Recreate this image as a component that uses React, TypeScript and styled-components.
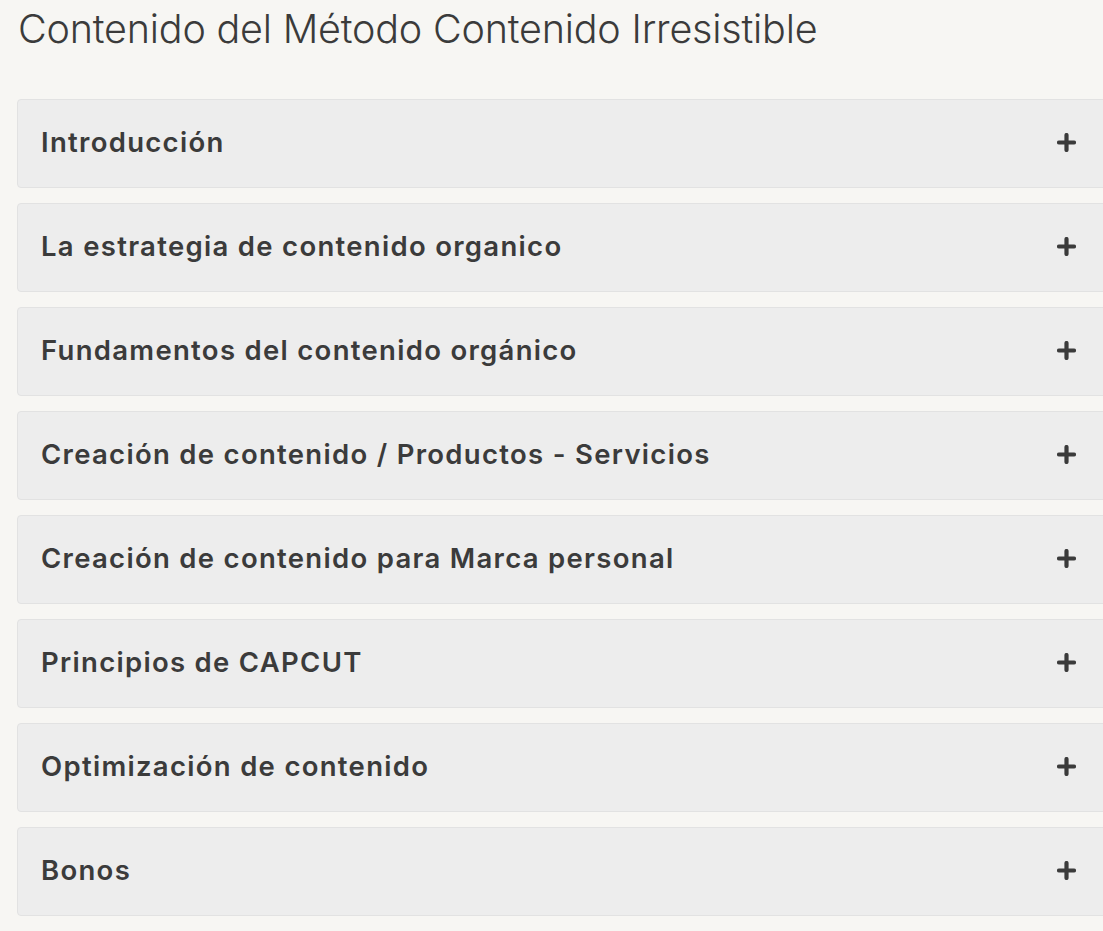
import styled, { createGlobalStyle } from 'styled-components';

const GlobalStyle = createGlobalStyle`
  html, body {
    margin: 0;
    padding: 0;
    background: #f7f6f3;
    overflow: hidden;
  }
  body {
    font-family: Inter, "Noto Sans", sans-serif;
    color: #3b3b3b;
  }
`;

const Page = styled.div`
  padding: 6px 0 0 17px;
  width: 1100px;
`;

const Title = styled.h2`
  margin: 0 0 0 1px;
  font-size: 39.5px;
  font-weight: 300;
  line-height: 46px;
  letter-spacing: -0.2px;
  color: #3b3b3b;
`;

const List = styled.div`
  margin-top: 47px;
  display: flex;
  flex-direction: column;
  gap: 15px;
`;

const Item = styled.div`
  display: flex;
  align-items: center;
  justify-content: space-between;
  height: 89px;
  box-sizing: border-box;
  padding: 0 40px 3px 23px;
  background: #ededed;
  border: 1px solid #e2e2e2;
  border-radius: 4px;
`;

const ItemTitle = styled.span`
  font-size: 27.5px;
  font-weight: 600;
  letter-spacing: 1.3px;
  color: #3b3b3b;
`;

const Plus = styled.svg`
  width: 19px;
  height: 19px;
  flex: none;
`;

const PlusIcon = () => (
  <Plus viewBox="0 0 19 19">
    <path d="M9.5 2v15M2 9.5h15" stroke="#3b3b3b" strokeWidth="4.2" strokeLinecap="round" />
  </Plus>
);

const sections = [
  'Introducción',
  'La estrategia de contenido organico',
  'Fundamentos del contenido orgánico',
  'Creación de contenido / Productos - Servicios',
  'Creación de contenido para Marca personal',
  'Principios de CAPCUT',
  'Optimización de contenido',
  'Bonos',
];

export default function App() {
  return (
    <>
      <GlobalStyle />
      <Page>
        <Title>Contenido del Método Contenido Irresistible</Title>
        <List>
          {sections.map((s) => (
            <Item key={s}>
              <ItemTitle>{s}</ItemTitle>
              <PlusIcon />
            </Item>
          ))}
        </List>
      </Page>
    </>
  );
}
